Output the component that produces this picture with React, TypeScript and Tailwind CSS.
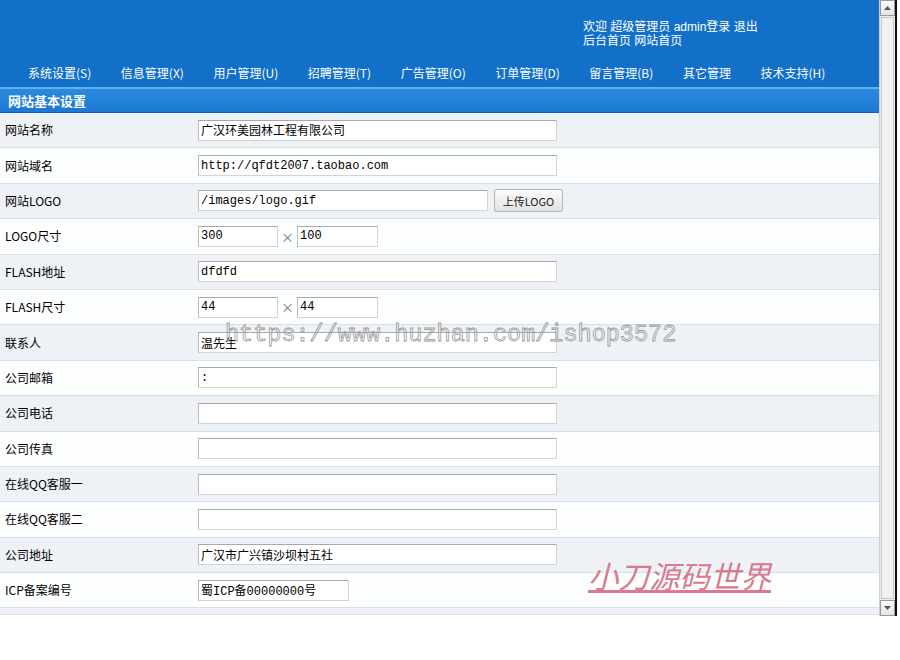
import React from "react";

const CN = { fontFamily: '"Noto Sans CJK SC", "Noto Sans", sans-serif' };
const HEAD = { fontFamily: '"Liberation Sans", "Noto Sans CJK SC", sans-serif' };
const MONO = { fontFamily: '"Liberation Mono", "Noto Sans CJK SC", monospace' };

const navItems = [
  "系统设置(S)",
  "信息管理(X)",
  "用户管理(U)",
  "招聘管理(T)",
  "广告管理(O)",
  "订单管理(D)",
  "留言管理(B)",
  "其它管理",
  "技术支持(H)",
];

function Field({ value = "", w = "w-[359px]" }: { value?: string; w?: string }) {
  return (
    <input
      readOnly
      defaultValue={value}
      style={MONO}
      className={`${w} h-[21px] bg-white border border-[#d4d4d4] border-t-[#a9a9a9] border-l-[#bcbcbc] px-[2px] text-[12px] text-black outline-none`}
    />
  );
}

function Size({ a, b }: { a: string; b: string }) {
  return (
    <div className="flex items-center">
      <Field value={a} w="w-[80px]" />
      <span className="w-[19px] text-center text-[13px] text-[#777]" style={CN}>
        ×
      </span>
      <Field value={b} w="w-[81px]" />
    </div>
  );
}

type Row = { label: string; content: React.ReactNode };

const rows: Row[] = [
  { label: "网站名称", content: <Field value="广汉环美园林工程有限公司" /> },
  { label: "网站域名", content: <Field value="http://qfdt2007.taobao.com" /> },
  {
    label: "网站LOGO",
    content: (
      <div className="flex items-center gap-[6px]">
        <Field value="/images/logo.gif" w="w-[290px]" />
        <button
          style={CN}
          className="w-[69px] h-[23px] border border-[#b5b5b5] rounded-[2px] bg-gradient-to-b from-[#fbfbfb] to-[#e2e2e2] text-[11px] text-[#222]"
        >
          上传LOGO
        </button>
      </div>
    ),
  },
  { label: "LOGO尺寸", content: <Size a="300" b="100" /> },
  { label: "FLASH地址", content: <Field value="dfdfd" /> },
  { label: "FLASH尺寸", content: <Size a="44" b="44" /> },
  { label: "联系人", content: <Field value="温先生" /> },
  { label: "公司邮箱", content: <Field value=":" /> },
  { label: "公司电话", content: <Field /> },
  { label: "公司传真", content: <Field /> },
  { label: "在线QQ客服一", content: <Field /> },
  { label: "在线QQ客服二", content: <Field /> },
  { label: "公司地址", content: <Field value="广汉市广兴镇沙坝村五社" /> },
  { label: "ICP备案编号", content: <Field value="蜀ICP备00000000号" w="w-[151px]" /> },
];

export default function App() {
  return (
    <div className="w-[900px] h-[660px] bg-white relative overflow-hidden">
      <div className="flex h-[616px]">
        {/* main column */}
        <div className="w-[879px] flex flex-col">
          {/* header */}
          <div className="h-[87px] bg-[#1370c8] flex flex-col" style={CN}>
            <div className="h-[60px] flex">
              <div
                className="ml-[583px] mt-[20px] text-[12px] leading-[14px] text-white flex flex-col"
                style={HEAD}
              >
                <span className="h-[14px]">欢迎 超级管理员 admin登录 退出</span>
                <span className="h-[14px]">后台首页 网站首页</span>
              </div>
            </div>
            <div className="flex gap-[29.6px] pl-[28px] text-[12px] text-white leading-[16px] mt-[5px]">
              {navItems.map((n) => (
                <span key={n}>{n}</span>
              ))}
            </div>
          </div>
          <div className="h-[2px] bg-[#5fb0ec]" />
          {/* section bar */}
          <div
            className="h-[24px] bg-gradient-to-b from-[#2b8ae0] to-[#1c78d2] border-b border-[#1460b0] flex items-center pl-[8px] text-white font-bold text-[13px]"
            style={CN}
          >
            网站基本设置
          </div>
          {/* rows */}
          <div className="flex flex-col">
            {rows.map((r, i) => (
              <div
                key={r.label}
                className={`h-[35.4px] flex items-center border-b border-[#d6e0e8] ${
                  i % 2 === 0 ? "bg-[#eef2f6]" : "bg-[#fdfefe]"
                }`}
              >
                <div className="w-[198px] pl-[5px] text-[12px] text-black" style={CN}>
                  {r.label}
                </div>
                {r.content}
              </div>
            ))}
            <div className="h-[7px] bg-[#eef2f6] border-b border-[#d6e0e8]" />
          </div>
        </div>
        {/* scrollbar */}
        <div className="w-[16px] flex flex-col bg-[#ececec] border-l border-[#d0d0d0]">
          <div className="h-[16px] bg-gradient-to-b from-[#fafafa] to-[#e4e4e4] border border-[#9a9a9a] flex items-center justify-center">
            <svg width="7" height="4" viewBox="0 0 7 4">
              <path d="M0 4 L3.5 0 L7 4 Z" fill="#555" />
            </svg>
          </div>
          <div className="flex-1 mx-[1px] my-[1px] border border-[#c8c8c8] bg-[#f1f1f1]" />
          <div className="h-[16px] bg-gradient-to-b from-[#fafafa] to-[#e4e4e4] border border-[#9a9a9a] flex items-center justify-center">
            <svg width="7" height="4" viewBox="0 0 7 4">
              <path d="M0 0 L3.5 4 L7 0 Z" fill="#555" />
            </svg>
          </div>
        </div>
        <div className="w-[2px] bg-[#111]" />
      </div>

      {/* watermark */}
      <div
        className="absolute left-[225px] top-[320px] text-[23.5px] leading-[30px] text-transparent [-webkit-text-stroke:0.8px_#9a9a9a] whitespace-nowrap pointer-events-none"
        style={MONO}
      >
        https://www.huzhan.com/ishop3572
      </div>
      <div
        className="absolute left-[588px] top-[558px] text-[30.5px] leading-[34px] italic underline text-[#d97a8f] whitespace-nowrap pointer-events-none"
        style={CN}
      >
        小刀源码世界
      </div>
    </div>
  );
}
